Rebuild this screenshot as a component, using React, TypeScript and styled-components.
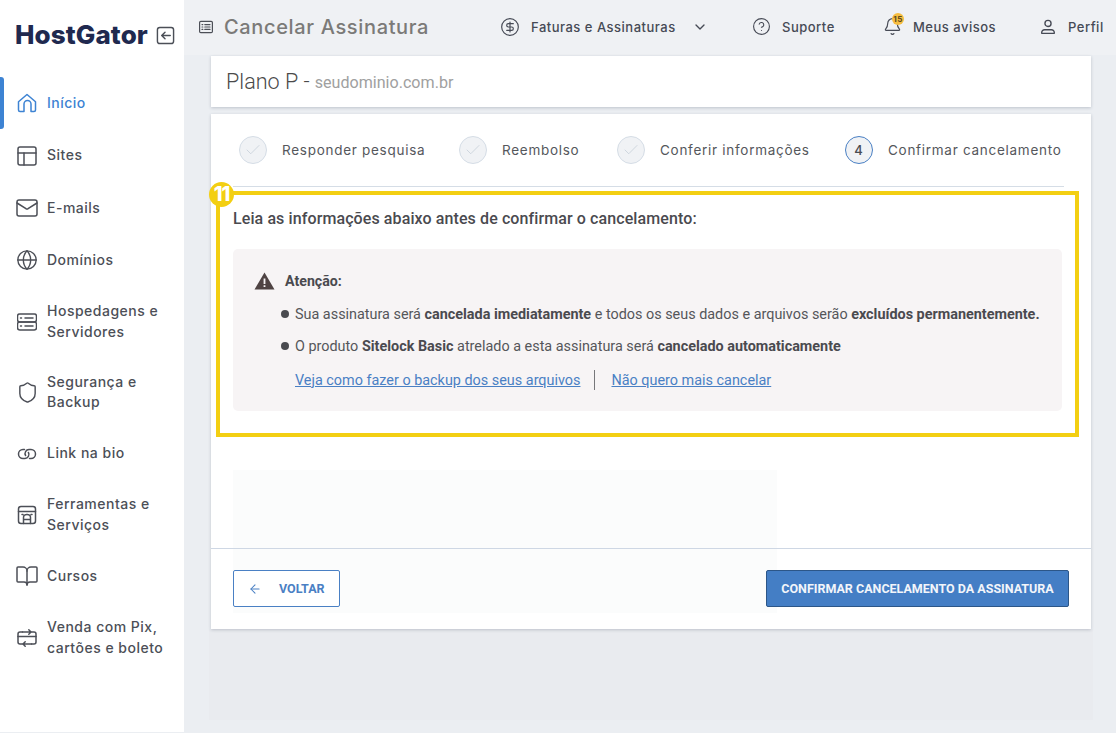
import { createGlobalStyle, styled } from "styled-components";
import { ArrowLeft, Bell, BookOpen, Check, ChevronDown, CircleDollarSign, CircleHelp, Globe, Mail, PanelsTopLeft, Shield } from "lucide-react";

const GlobalStyle = createGlobalStyle`
  html, body { margin: 0; padding: 0; height: 100%; overflow: hidden; }
  body { background: #ebeef2; font-family: "Roboto", "Liberation Sans", sans-serif; }
  * { box-sizing: border-box; }
`;

const Page = styled.div`
  display: flex;
  width: 1116px;
  height: 733px;
  overflow: hidden;
  background: #ebeef2;
`;

const Sidebar = styled.aside`
  width: 184px;
  flex: none;
  height: 732px;
  background: #fff;
  display: flex;
  flex-direction: column;
`;

const Brand = styled.div`
  height: 77px;
  padding: 20px 0 0 15px;
  display: flex;
  align-items: flex-start;
  gap: 8px;
`;

const Logo = styled.span`
  font-family: "Inter", sans-serif;
  font-size: 26px;
  font-weight: 800;
  line-height: 29px;
  letter-spacing: 0.1px;
  color: #20294f;
`;

const CollapseIcon = styled.span`
  display: flex;
  margin-top: 6px;
  color: #4b4f57;
`;

const NavItem = styled.a<{ $active?: boolean; $tall?: boolean }>`
  height: ${(p) => (p.$tall ? "70.4px" : "52.4px")};
  flex: none;
  display: flex;
  align-items: center;
  gap: 10px;
  padding-left: 17px;
  position: relative;
  color: ${(p) => (p.$active ? "#3d83d3" : "#4c4f57")};
  font-family: "Inter", sans-serif;
  font-size: 14px;
  font-weight: 500;
  line-height: 20.5px;
  letter-spacing: 0.5px;

  ${(p) =>
    p.$active &&
    `&::before {
      content: "";
      position: absolute;
      left: 0;
      top: 0;
      bottom: 0;
      width: 4px;
      background: #3d83d3;
      border-radius: 0 3px 3px 0;
    }`}
`;

const NavIcon = styled.span`
  width: 20px;
  height: 20px;
  flex: none;
  display: flex;
  align-items: center;
  justify-content: center;

  svg { flex: none; }
`;

const Main = styled.div`
  flex: 1;
  min-width: 0;
  display: flex;
  flex-direction: column;
`;

const TopBar = styled.header`
  height: 55px;
  flex: none;
  background: #eff1f4;
  display: flex;
  align-items: center;
  padding: 0 0 2px 14px;
  color: #4c4f57;
`;

const PageTitle = styled.h1`
  margin: 0 0 0 10px;
  width: 276px;
  font-family: "Inter", sans-serif;
  font-size: 20px;
  font-weight: 500;
  letter-spacing: 0.65px;
  color: #7b7a78;
`;

const TopLink = styled.div<{ $width: number }>`
  width: ${(p) => p.$width}px;
  flex: none;
  display: flex;
  align-items: center;
  gap: 11px;
  font-family: "Inter", sans-serif;
  font-size: 13px;
  font-weight: 500;
  letter-spacing: 0.5px;
  white-space: nowrap;
  color: #464a55;
`;

const BellWrap = styled.span`
  position: relative;
  display: flex;
`;

const BellBadge = styled.span`
  position: absolute;
  top: -4px;
  left: 9px;
  width: 12px;
  height: 12px;
  border-radius: 50%;
  background: #f6bd40;
  color: #5a4a20;
  font-size: 8px;
  font-weight: 700;
  line-height: 12px;
  text-align: center;
`;

const Content = styled.main`
  flex: 1;
  padding: 1px 25px 0 27px;
  display: flex;
  flex-direction: column;
`;

const PlanCard = styled.section`
  height: 51px;
  flex: none;
  background: #fff;
  box-shadow: 0 1px 3px rgba(90, 100, 120, 0.3);
  padding: 0 15px;
  display: flex;
  align-items: center;
  gap: 5px;
  font-size: 21.6px;
  font-weight: 300;
  color: #4a4a4a;
`;

const Domain = styled.span`
  font-size: 16.1px;
  font-weight: 400;
  color: #a0a0a0;
  margin-top: 2px;
`;

const MainCard = styled.section`
  margin-top: 7px;
  height: 515px;
  flex: none;
  position: relative;
  background: #fff;
  box-shadow: 0 1px 3px rgba(90, 100, 120, 0.3);
  display: flex;
  flex-direction: column;
`;

const Steps = styled.div`
  height: 73px;
  flex: none;
  margin: 0 27px 0 22px;
  padding: 0 0 1px 6px;
  border-bottom: 1px solid #d5dde6;
  display: flex;
  align-items: center;
`;

const Step = styled.div<{ $width: number }>`
  width: ${(p) => p.$width}px;
  flex: none;
  display: flex;
  align-items: center;
  gap: 15px;
  font-family: "Inter", sans-serif;
  font-size: 13.5px;
  letter-spacing: 0.72px;
  white-space: nowrap;
  color: #55575c;
`;

const StepCircle = styled.span<{ $current?: boolean }>`
  width: 28px;
  height: 28px;
  flex: none;
  border-radius: 50%;
  border: 1px solid ${(p) => (p.$current ? "#4a80c4" : "#d5dde6")};
  background: #f0f2f5;
  color: ${(p) => (p.$current ? "#4a4c52" : "#c3ccd6")};
  display: flex;
  align-items: center;
  justify-content: center;
  font-family: "Inter", sans-serif;
  font-size: 13px;
  font-weight: 500;
`;

const Body = styled.div`
  flex: 1;
  padding: 22px 29px 0 22px;
`;

const Lead = styled.h2`
  margin: 0;
  font-size: 16px;
  line-height: 19px;
  font-weight: 500;
  letter-spacing: 0.1px;
  color: #4a4a4f;
`;

const AlertBox = styled.div`
  margin-top: 21px;
  height: 162px;
  background: #f7f4f5;
  border-radius: 5px;
  padding: 22px 0 0 21px;
  font-size: 14.4px;
  color: #55565a;
`;

const AlertHead = styled.div`
  display: flex;
  align-items: center;
  gap: 10px;
  height: 20px;
  font-size: 14.2px;
  font-weight: 700;
  color: #4a4a4f;
`;

const AlertList = styled.ul`
  list-style: none;
  margin: 14px 0 0;
  padding: 0 0 0 27px;
`;

const AlertRow = styled.li`
  height: 32px;
  line-height: 20px;
  display: flex;
  gap: 6px;
  white-space: pre;

  &::before {
    content: "";
    width: 8px;
    height: 8px;
    margin-top: 5px;
    border-radius: 50%;
    background: #4a4a4f;
    flex: none;
  }

  b { font-weight: 700; color: #4a4a4f; }
`;

const AlertLinks = styled.div`
  margin: 1px 0 0 41px;
  display: flex;
  align-items: center;
  height: 20px;
`;

const TextLink = styled.a`
  color: #4a80c4;
  text-decoration: underline;
  white-space: nowrap;
`;

const LinkRule = styled.span`
  width: 1px;
  height: 20px;
  background: #77777a;
  margin: 0 16px 0 14px;
`;

const GhostPanel = styled.div`
  position: absolute;
  left: 22px;
  top: 356px;
  width: 544px;
  height: 143px;
  background: #fbfcfc;
`;

const Footer = styled.footer`
  height: 81px;
  flex: none;
  position: relative;
  border-top: 1px solid #ced7e4;
  padding: 21px 22px 0;
  display: flex;
  justify-content: space-between;
  align-items: flex-start;
`;

const BackButton = styled.button`
  width: 107px;
  height: 37px;
  border: 1px solid #4a80c4;
  border-radius: 2px;
  background: #fff;
  color: #4a80c4;
  display: flex;
  align-items: center;
  gap: 17px;
  padding: 0 0 0 14px;
  font-family: "Roboto", sans-serif;
  font-size: 12.5px;
  font-weight: 700;
`;

const ConfirmButton = styled.button`
  width: 303px;
  height: 37px;
  border: 1px solid #2c5688;
  border-radius: 2px;
  background: #447ec5;
  color: #f2f5fa;
  padding: 0;
  font-family: "Roboto", sans-serif;
  font-size: 12.5px;
  font-weight: 700;
`;

const BottomBand = styled.div`
  height: 91px;
  flex: none;
  margin: 0 -2px;
  background: #e9ebef;
`;

const Highlight = styled.div`
  position: absolute;
  left: 5px;
  top: 77px;
  width: 863px;
  height: 246px;
  border: 4px solid #f3cf12;
  pointer-events: none;
`;

const HighlightBadge = styled.span`
  position: absolute;
  left: -11px;
  top: -13px;
  width: 25px;
  height: 25px;
  border-radius: 50%;
  background: #f3cf12;
  color: #fff;
  font-family: "Inter", sans-serif;
  font-size: 20px;
  font-weight: 800;
  line-height: 25px;
  text-align: center;
  letter-spacing: -1px;
`;

const Stroke = ({ children, size = 20 }: { children: React.ReactNode; size?: number }) => (
  <svg width={size} height={size} viewBox="0 0 20 20" fill="none" stroke="currentColor" strokeWidth="1.5" strokeLinecap="round" strokeLinejoin="round">
    {children}
  </svg>
);

const HomeIcon = () => (
  <Stroke>
    <path d="M1.5 8.8 10 1.5l8.5 7.3v8.2a1.5 1.5 0 0 1-1.5 1.5h-3V11a3.5 3.5 0 0 0-7 0v7.5H3A1.5 1.5 0 0 1 1.5 17z" />
  </Stroke>
);
const ServerIcon = () => (
  <Stroke>
    <rect x="0.5" y="2" width="19" height="8" rx="2.2" />
    <rect x="0.5" y="10" width="19" height="8" rx="2.2" />
    <path d="M3.5 6h1M8 6h8M3.500 14h1M8 14h8" />
  </Stroke>
);
const LinkIcon = () => (
  <Stroke>
    <path d="M7.500 5.500H6a4.500 4.500 0 0 0 0 9h2a4 4 0 0 0 3.400-6" />
    <path d="M12.500 14.500H14a4.500 4.500 0 0 0 0-9h-2a4 4 0 0 0-3.400 6" />
  </Stroke>
);
const StoreIcon = () => (
  <Stroke>
    <rect x="1.500" y="1.500" width="17" height="17" rx="2.500" />
    <path d="M1.500 6.500h17M5 9.500h1M9.500 9.500h1M14 9.500h1M6.500 18.500v-6a3.500 3 0 0 1 7 0v6M6.500 14.500h7" />
  </Stroke>
);
const PaymentIcon = () => (
  <Stroke>
    <path d="M5.500 4H3a2 2 0 0 0-2 2v8a2 2 0 0 0 2 2h2.500M14.500 4H17a2 2 0 0 1 2 2v8a2 2 0 0 1-2 2h-2.500" />
    <path d="M5.500 4h8.500M11.800 1.800 14 4l-2.200 2.200M14.500 16H6M8.200 13.800 6 16l2.200 2.200M1 8.500h18" />
  </Stroke>
);
const ListIcon = () => (
  <Stroke size={16}>
    <rect x="2" y="3" width="16" height="14" rx="1.500" />
    <path d="M5 7h1M5 10h1M5 13h1M8.500 7H15M8.500 10H15M8.500 13H15" />
  </Stroke>
);
const BackBoxIcon = () => (
  <Stroke size={19}>
    <rect x="1.500" y="1.500" width="17" height="17" rx="2.500" />
    <path d="M15 10H6M9.500 6.500 6 10l3.500 3.500" />
  </Stroke>
);
const ProfileIcon = () => (
  <Stroke size={18}>
    <circle cx="10" cy="6" r="3.400" />
    <path d="M3 17v-.8a3.200 3.200 0 0 1 3.200-3.200h7.600a3.200 3.200 0 0 1 3.200 3.200v.8z" />
  </Stroke>
);
const WarningIcon = () => (
  <svg width="21" height="18" viewBox="0 0 21 18">
    <path d="M10.500 0.500 20.500 17.500H0.500z" fill="#4f4343" />
    <path d="M9.600 6.500h1.800v5.500H9.600zM9.600 13.300h1.800v1.800H9.600z" fill="#f7f4f5" />
  </svg>
);

const navItems = [
  { label: "Início", icon: <HomeIcon />, active: true },
  { label: "Sites", icon: <PanelsTopLeft size={24} strokeWidth={1.5} /> },
  { label: "E-mails", icon: <Mail size={24} strokeWidth={1.5} /> },
  { label: "Domínios", icon: <Globe size={22} strokeWidth={1.5} /> },
  { label: "Hospedagens e Servidores", icon: <ServerIcon />, tall: true },
  { label: "Segurança e Backup", icon: <Shield size={23} strokeWidth={1.5} />, tall: true },
  { label: "Link na bio", icon: <LinkIcon /> },
  { label: "Ferramentas e Serviços", icon: <StoreIcon />, tall: true },
  { label: "Cursos", icon: <BookOpen size={24} strokeWidth={1.5} /> },
  { label: "Venda com Pix, cartões e boleto", icon: <PaymentIcon />, tall: true },
];

const steps = [
  { label: "Responder pesquisa", width: 220 },
  { label: "Reembolso", width: 158 },
  { label: "Conferir informações", width: 228 },
];

export default function App() {
  return (
    <>
      <GlobalStyle />
      <Page>
        <Sidebar>
          <Brand>
            <Logo>HostGator</Logo>
            <CollapseIcon>
              <BackBoxIcon />
            </CollapseIcon>
          </Brand>
          {navItems.map((item) => (
            <NavItem key={item.label} $active={item.active} $tall={item.tall}>
              <NavIcon>{item.icon}</NavIcon>
              <span>{item.label}</span>
            </NavItem>
          ))}
        </Sidebar>

        <Main>
          <TopBar>
            <ListIcon />
            <PageTitle>Cancelar Assinatura</PageTitle>
            <TopLink $width={252}>
              <CircleDollarSign size={20} strokeWidth={1.4} />
              <span>Faturas e Assinaturas</span>
              <ChevronDown size={16} strokeWidth={2} style={{ marginLeft: 5 }} />
            </TopLink>
            <TopLink $width={131}>
              <CircleHelp size={19} strokeWidth={1.4} />
              <span>Suporte</span>
            </TopLink>
            <TopLink $width={156}>
              <BellWrap>
                <Bell size={19} strokeWidth={1.5} />
                <BellBadge>15</BellBadge>
              </BellWrap>
              <span>Meus avisos</span>
            </TopLink>
            <TopLink $width={76}>
              <ProfileIcon />
              <span>Perfil</span>
            </TopLink>
          </TopBar>

          <Content>
            <PlanCard>
              Plano P -<Domain>seudominio.com.br</Domain>
            </PlanCard>

            <MainCard>
              <Steps>
                {steps.map((step) => (
                  <Step key={step.label} $width={step.width}>
                    <StepCircle>
                      <Check size={18} strokeWidth={1} />
                    </StepCircle>
                    {step.label}
                  </Step>
                ))}
                <Step $width={219}>
                  <StepCircle $current>4</StepCircle>
                  Confirmar cancelamento
                </Step>
              </Steps>

              <Body>
                <Lead>Leia as informações abaixo antes de confirmar o cancelamento:</Lead>
                <AlertBox>
                  <AlertHead>
                    <WarningIcon />
                    Atenção:
                  </AlertHead>
                  <AlertList>
                    <AlertRow>
                      <span>
                        Sua assinatura será <b>cancelada imediatamente</b> e todos os seus dados e arquivos serão <b>excluídos permanentemente.</b>
                      </span>
                    </AlertRow>
                    <AlertRow>
                      <span>
                        O produto <b>Sitelock Basic</b> atrelado a esta assinatura será <b>cancelado automaticamente</b>
                      </span>
                    </AlertRow>
                  </AlertList>
                  <AlertLinks>
                    <TextLink>Veja como fazer o backup dos seus arquivos</TextLink>
                    <LinkRule />
                    <TextLink>Não quero mais cancelar</TextLink>
                  </AlertLinks>
                </AlertBox>
              </Body>

              <GhostPanel />

              <Footer>
                <BackButton>
                  <ArrowLeft size={14} strokeWidth={1.8} />
                  VOLTAR
                </BackButton>
                <ConfirmButton>CONFIRMAR CANCELAMENTO DA ASSINATURA</ConfirmButton>
              </Footer>

              <Highlight>
                <HighlightBadge>11</HighlightBadge>
              </Highlight>
            </MainCard>

            <BottomBand />
          </Content>
        </Main>
      </Page>
    </>
  );
}
